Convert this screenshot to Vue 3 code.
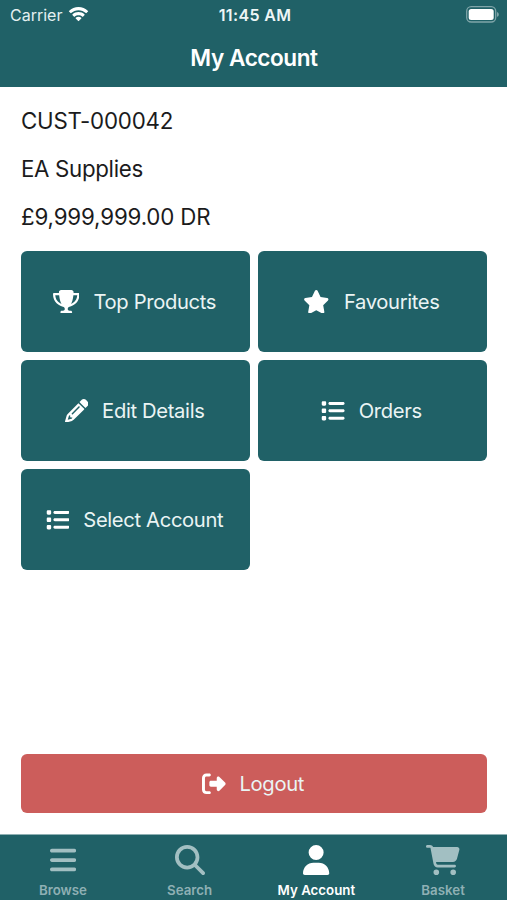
<script setup>
const icons = {
  trophy: {
    width: 576,
    path: 'M400 0H176c-26.5 0-48.1 21.8-47.1 48.2c.2 5.3 .4 10.6 .7 15.8H24C10.7 64 0 74.7 0 88c0 92.6 33.5 157 78.5 200.7c44.3 43.1 98.3 64.8 138.1 75.8c23.4 6.5 39.4 26 39.4 45.6c0 20.9-17 37.9-37.9 37.9H192c-17.7 0-32 14.3-32 32s14.3 32 32 32H384c17.7 0 32-14.3 32-32s-14.3-32-32-32H357.9C337 448 320 431 320 410.1c0-19.6 15.9-39.2 39.4-45.6c39.9-11 93.9-32.7 138.2-75.8C542.5 245 576 180.6 576 88c0-13.3-10.7-24-24-24H446.4c.3-5.2 .5-10.4 .7-15.8C448.1 21.8 426.5 0 400 0zM48.9 112h84.4c9.1 90.1 29.2 150.3 51.9 190.6c-24.9-11-50.8-26.5-73.2-48.3c-32-31.1-58-76-63-142.3zM464.1 254.3c-22.4 21.8-48.3 37.3-73.2 48.3c22.7-40.3 42.8-100.5 51.9-190.6h84.4c-5.1 66.3-31.1 111.2-63 142.3z',
  },
  star: {
    width: 576,
    path: 'M316.9 18C311.6 7 300.4 0 288.1 0s-23.4 7-28.8 18L195 150.3 51.4 171.5c-12 1.8-22 10.2-25.7 21.7s-.7 24.2 7.9 32.7L137.8 329 113.2 474.7c-2 12 3 24.2 12.9 31.3s23 8 33.8 2.3l128.3-68.5 128.3 68.5c10.8 5.7 23.9 4.9 33.8-2.3s14.9-19.3 12.9-31.3L438.5 329 542.7 225.9c8.6-8.5 11.7-21.2 7.9-32.7s-13.7-19.9-25.7-21.7L381.2 150.3 316.9 18z',
  },
  pencil: {
    width: 512,
    path: 'M410.3 231l11.3-11.3-33.9-33.9-62.1-62.1L291.7 89.8l-11.3 11.3-22.6 22.6L58.6 322.9c-10.4 10.4-18 23.3-22.2 37.4L1 480.7c-2.5 8.4-.2 17.5 6.1 23.7s15.3 8.5 23.7 6.1l120.3-35.4c14.1-4.2 27-11.8 37.4-22.2L387.7 253.7 410.3 231zM160 399.4l-9.1 22.7c-4 3.1-8.5 5.4-13.3 6.9L59.4 452l23-78.1c1.4-4.9 3.8-9.4 6.9-13.3l22.7-9.1v32c0 8.8 7.2 16 16 16h32zM362.7 18.7L348.3 33.2 325.7 55.8 314.3 67.1l33.9 33.9 62.1 62.1 33.9 33.9 11.3-11.3 22.6-22.6 14.5-14.5c25-25 25-65.5 0-90.5L453.3 18.7c-25-25-65.5-25-90.5 0zm-47.4 168l-144 144c-6.2 6.2-16.4 6.2-22.6 0s-6.2-16.4 0-22.6l144-144c6.2-6.2 16.4-6.2 22.6 0s6.2 16.4 0 22.6z',
  },
  list: {
    width: 512,
    path: 'M48 48C26.7 48 16 58.7 16 76v40c0 17.3 10.7 28 28 28H84c17.3 0 28-10.7 28-28V76c0-17.3-10.7-28-28-28H48zM192 64c-17.7 0-32 14.3-32 32s14.3 32 32 32H480c17.7 0 32-14.3 32-32s-14.3-32-32-32H192zm0 160c-17.7 0-32 14.3-32 32s14.3 32 32 32H480c17.7 0 32-14.3 32-32s-14.3-32-32-32H192zm0 160c-17.7 0-32 14.3-32 32s14.3 32 32 32H480c17.7 0 32-14.3 32-32s-14.3-32-32-32H192zM16 236v40c0 17.3 10.7 28 28 28H84c17.3 0 28-10.7 28-28V236c0-17.3-10.7-28-28-28H44c-17.3 0-28 10.7-28 28zM44 368c-17.3 0-28 10.7-28 28v40c0 17.3 10.7 28 28 28H84c17.3 0 28-10.7 28-28V396c0-17.3-10.7-28-28-28H44z',
  },
  logout: {
    width: 512,
    path: 'M377.9 105.9L500.7 228.7c7.2 7.2 11.3 17.1 11.3 27.3s-4.1 20.1-11.3 27.3L377.9 406.1c-6.4 6.4-15 9.9-24 9.9c-18.7 0-33.9-15.2-33.9-33.9l0-62.1-128 0c-17.7 0-32-14.3-32-32l0-64c0-17.7 14.3-32 32-32l128 0 0-62.1c0-18.7 15.2-33.9 33.9-33.9c9 0 17.6 3.6 24 9.9zM160 96L96 96c-17.7 0-32 14.3-32 32l0 256c0 17.7 14.3 32 32 32l64 0c17.7 0 32 14.3 32 32s-14.3 32-32 32l-64 0c-53 0-96-43-96-96L0 128C0 75 43 32 96 32l64 0c17.7 0 32 14.3 32 32s-14.3 32-32 32z',
  },
  bars: {
    width: 448,
    path: 'M0 96C0 78.3 14.3 64 32 64H416c17.7 0 32 14.3 32 32s-14.3 32-32 32H32C14.3 128 0 113.7 0 96zM0 256c0-17.7 14.3-32 32-32H416c17.7 0 32 14.3 32 32s-14.3 32-32 32H32c-17.7 0-32-14.3-32-32zM448 416c0 17.7-14.3 32-32 32H32c-17.7 0-32-14.3-32-32s14.3-32 32-32H416c17.7 0 32 14.3 32 32z',
  },
  search: {
    width: 512,
    path: 'M416 208c0 45.9-14.9 88.3-40 122.7L502.6 457.4c12.5 12.5 12.5 32.8 0 45.3s-32.8 12.5-45.3 0L330.7 376c-34.4 25.2-76.8 40-122.7 40C93.1 416 0 322.9 0 208S93.1 0 208 0S416 93.1 416 208zM208 352a144 144 0 1 0 0-288 144 144 0 1 0 0 288z',
  },
  user: {
    width: 448,
    path: 'M224 256A128 128 0 1 0 224 0a128 128 0 1 0 0 256zm-45.7 48C79.8 304 0 383.8 0 482.3C0 498.7 13.3 512 29.7 512H418.3c16.4 0 29.7-13.3 29.7-29.7C448 383.8 368.2 304 269.7 304H178.3z',
  },
  cart: {
    width: 576,
    path: 'M0 24C0 10.7 10.7 0 24 0H69.5c22 0 41.5 12.8 50.6 32h411c26.3 0 45.5 25 38.6 50.4l-41 152.3c-8.5 31.4-37 53.3-69.5 53.3H170.7l5.4 28.5c2.2 11.3 12.1 19.5 23.6 19.5H488c13.3 0 24 10.7 24 24s-10.7 24-24 24H199.7c-34.6 0-64.3-24.6-70.7-58.5L77.4 54.5c-.7-3.8-4-6.5-7.9-6.5H24C10.7 48 0 37.3 0 24zM128 464a48 48 0 1 1 96 0 48 48 0 1 1 -96 0zm336-48a48 48 0 1 1 0 96 48 48 0 1 1 0-96z',
  },
}

const details = [
  { text: 'CUST-000042', cls: 'code' },
  { text: 'EA Supplies', cls: 'name' },
  { text: '£9,999,999.00 DR', cls: 'balance' },
]

const actions = [
  { label: 'Top Products', icon: 'trophy' },
  { label: 'Favourites', icon: 'star' },
  { label: 'Edit Details', icon: 'pencil' },
  { label: 'Orders', icon: 'list' },
  { label: 'Select Account', icon: 'list' },
]

const tabs = [
  { label: 'Browse', icon: 'bars' },
  { label: 'Search', icon: 'search' },
  { label: 'My Account', icon: 'user', active: true },
  { label: 'Basket', icon: 'cart' },
]

const viewBox = (name) => `0 0 ${icons[name].width} 512`
</script>

<template>
  <div class="screen">
    <header class="header">
      <div class="status">
        <div class="carrier">
          <span>Carrier</span>
          <svg class="wifi" viewBox="0 0 20 15">
            <path d="M10 3.1c2.7 0 5.2 1 7.1 2.8.2.2.4.2.6 0l1.5-1.5c.2-.2.2-.4 0-.6C16.7 1.4 13.5 0 10 0S3.3 1.4.8 3.8c-.2.2-.2.4 0 .6l1.5 1.5c.2.2.4.2.6 0C4.8 4.1 7.3 3.1 10 3.1z" />
            <path d="M10 8c1.4 0 2.7.5 3.7 1.4.2.2.4.2.6 0l1.6-1.6c.2-.2.2-.4 0-.6C14.3 5.7 12.2 4.9 10 4.9S5.7 5.7 4.1 7.2c-.2.2-.2.4 0 .6l1.6 1.6c.2.2.4.2.6 0C7.3 8.5 8.6 8 10 8z" />
            <path d="M12.7 10.5c.2.2.2.4 0 .6l-2.400 2.500c-.2.2-.4.2-.6 0l-2.400-2.500c-.2-.2-.2-.4 0-.6 1.500-1.300 3.900-1.300 5.400 0z" />
          </svg>
        </div>
        <div class="clock">11:45 AM</div>
        <svg class="battery" viewBox="0 0 34 17">
          <rect class="shell" x=".7" y=".7" width="29" height="15.3" rx="4.5" />
          <rect x="2.7" y="2.9" width="25" height="11" rx="2.5" />
          <path class="cap" d="M31 6c1.3.5 1.8 1.4 1.8 2.4s-.5 1.9-1.8 2.4z" />
        </svg>
      </div>
      <h1 class="title">My Account</h1>
    </header>

    <main class="content">
      <p v-for="d in details" :key="d.cls" class="detail" :class="d.cls">{{ d.text }}</p>

      <div class="grid">
        <button v-for="a in actions" :key="a.label" class="tile">
          <svg class="icon" :viewBox="viewBox(a.icon)"><path :d="icons[a.icon].path" /></svg>
          <span>{{ a.label }}</span>
        </button>
      </div>

      <button class="logout">
        <svg class="icon" :viewBox="viewBox('logout')"><path :d="icons.logout.path" /></svg>
        <span>Logout</span>
      </button>
    </main>

    <nav class="tabs">
      <a v-for="t in tabs" :key="t.label" class="tab" :class="{ active: t.active }">
        <svg class="tab-icon" :viewBox="viewBox(t.icon)"><path :d="icons[t.icon].path" /></svg>
        <span>{{ t.label }}</span>
      </a>
    </nav>
  </div>
</template>

<style>
body {
  margin: 0;
  background: #fff;
}
</style>

<style scoped>
.screen {
  display: flex;
  flex-direction: column;
  box-sizing: border-box;
  height: 900px;
  overflow: hidden;
  font-family: Inter, 'Liberation Sans', sans-serif;
  color: #1b1b1c;
  background: #fff;
}
svg {
  display: block;
  fill: currentColor;
}
.header {
  height: 87px;
  color: #fff;
  background: #206167;
}
.status {
  display: grid;
  grid-template-columns: 1fr auto 1fr;
  align-items: center;
  height: 30px;
  padding: 0 7px 0 10px;
  font-size: 16px;
}
.carrier {
  display: flex;
  align-items: center;
  gap: 6px;
  color: #e4f0f1;
}
.wifi {
  width: 21px;
  height: 15.5px;
  color: #fff;
}
.clock {
  font-weight: 600;
  letter-spacing: 0.35px;
  color: #eef6f6;
}
.battery {
  width: 34px;
  height: 17px;
  margin-bottom: 2px;
  justify-self: end;
}
.shell {
  fill: none;
  stroke: #7fa5a9;
  stroke-width: 1.3;
}
.cap {
  fill: #7fa5a9;
}
.title {
  margin: 13px 0 0;
  padding-left: 1px;
  font-size: 22.6px;
  font-weight: 600;
  line-height: 30px;
  letter-spacing: -0.45px;
  text-align: center;
}
.content {
  display: flex;
  flex: 1;
  flex-direction: column;
  padding: 10px 20px 21px 21px;
}
.detail {
  margin: 0;
  font-size: 22.3px;
  line-height: 48px;
}
.code {
  letter-spacing: -0.22px;
}
.name {
  letter-spacing: -0.32px;
}
.balance {
  letter-spacing: -0.16px;
}
.grid {
  display: grid;
  grid-template-columns: 1fr 1fr;
  grid-auto-rows: 101px;
  gap: 8px;
  margin-top: 10px;
}
.tile,
.logout {
  display: flex;
  align-items: center;
  justify-content: center;
  gap: 14px;
  padding: 0 2px 0 0;
  border: 0;
  border-radius: 6px;
  font: inherit;
  font-size: 20.2px;
  letter-spacing: -0.34px;
  color: #eaf4f4;
  background: #206167;
}
.logout {
  height: 59px;
  margin-top: auto;
  background: #cc5d5b;
}
.icon {
  height: 23.6px;
  color: #fff;
}
.tabs {
  display: grid;
  grid-template-columns: repeat(4, 1fr);
  box-sizing: border-box;
  height: 66px;
  border-top: 1px solid #8fb0b3;
  background: #206167;
}
.tab {
  display: flex;
  flex-direction: column;
  align-items: center;
  padding: 10px 1px 0 0;
  font-size: 13.3px;
  font-weight: 600;
  line-height: 16px;
  color: #8fb0b4;
}
.tab-icon {
  height: 30px;
  margin-bottom: 7px;
  color: #a2bfc2;
}
.active,
.active .tab-icon {
  color: #fff;
}
</style>
